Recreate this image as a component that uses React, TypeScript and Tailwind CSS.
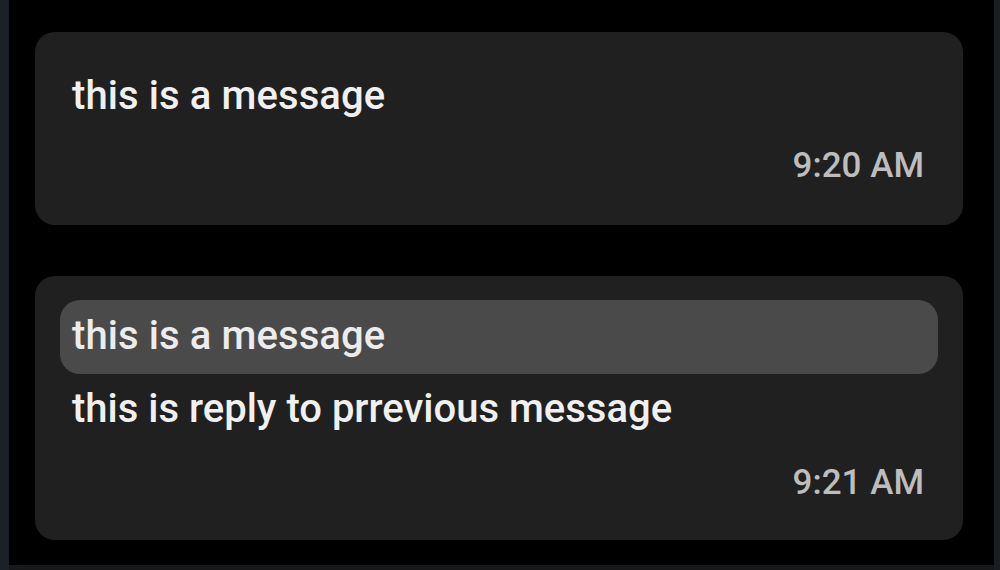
import React from "react";

interface Message {
  id: number;
  text: string;
  time: string;
  replyTo?: string;
}

const messages: Message[] = [
  { id: 1, text: "this is a message", time: "9:20 AM" },
  { id: 2, text: "this is reply to prrevious message", time: "9:21 AM", replyTo: "this is a message" },
];

const MessageCard: React.FC<{ message: Message }> = ({ message }) => {
  if (message.replyTo) {
    return (
      <div className="bg-[#202020] rounded-[20px] pt-[24px] pb-[40px] px-[25px]">
        <div className="bg-[#4a4a4a] rounded-[20px] px-[12px] pt-[16px] pb-[18px]">
          <p className="text-[40px] leading-[40px] font-medium text-[#ececec] tracking-[0.1px]">{message.replyTo}</p>
        </div>
        <p className="mt-[15px] px-[12px] text-[40px] leading-[40px] font-medium text-[#f0f0f0]">{message.text}</p>
        <p className="mt-[36px] pr-[14px] text-right text-[35px] leading-[35px] font-medium text-[#bdbdbd]">{message.time}</p>
      </div>
    );
  }
  return (
    <div className="bg-[#202020] rounded-[20px] pt-[44px] pb-[42px] pl-[37px] pr-[39px]">
      <p className="text-[40px] leading-[40px] font-medium text-[#f0f0f0] tracking-[0.1px]">{message.text}</p>
      <p className="mt-[32px] text-right text-[35px] leading-[35px] font-medium text-[#bdbdbd]">{message.time}</p>
    </div>
  );
};

export default function App() {
  return (
    <div
      className="w-[1000px] h-[570px] flex bg-[#1a1d22] overflow-hidden"
      style={{ fontFamily: "Roboto, 'Liberation Sans', sans-serif" }}
    >
      <div className="w-[9px] bg-[#1c2128]" />
      <div className="flex-1 flex flex-col">
        <div className="flex-1 bg-black pt-[32px] pl-[26px] pr-[31px] flex flex-col gap-[51px]">
          {messages.map((m) => (
            <MessageCard key={m.id} message={m} />
          ))}
        </div>
        <div className="h-[5px] bg-[#15181c]" />
      </div>
      <div className="w-[6px] bg-[#1a1d22]" />
    </div>
  );
}
